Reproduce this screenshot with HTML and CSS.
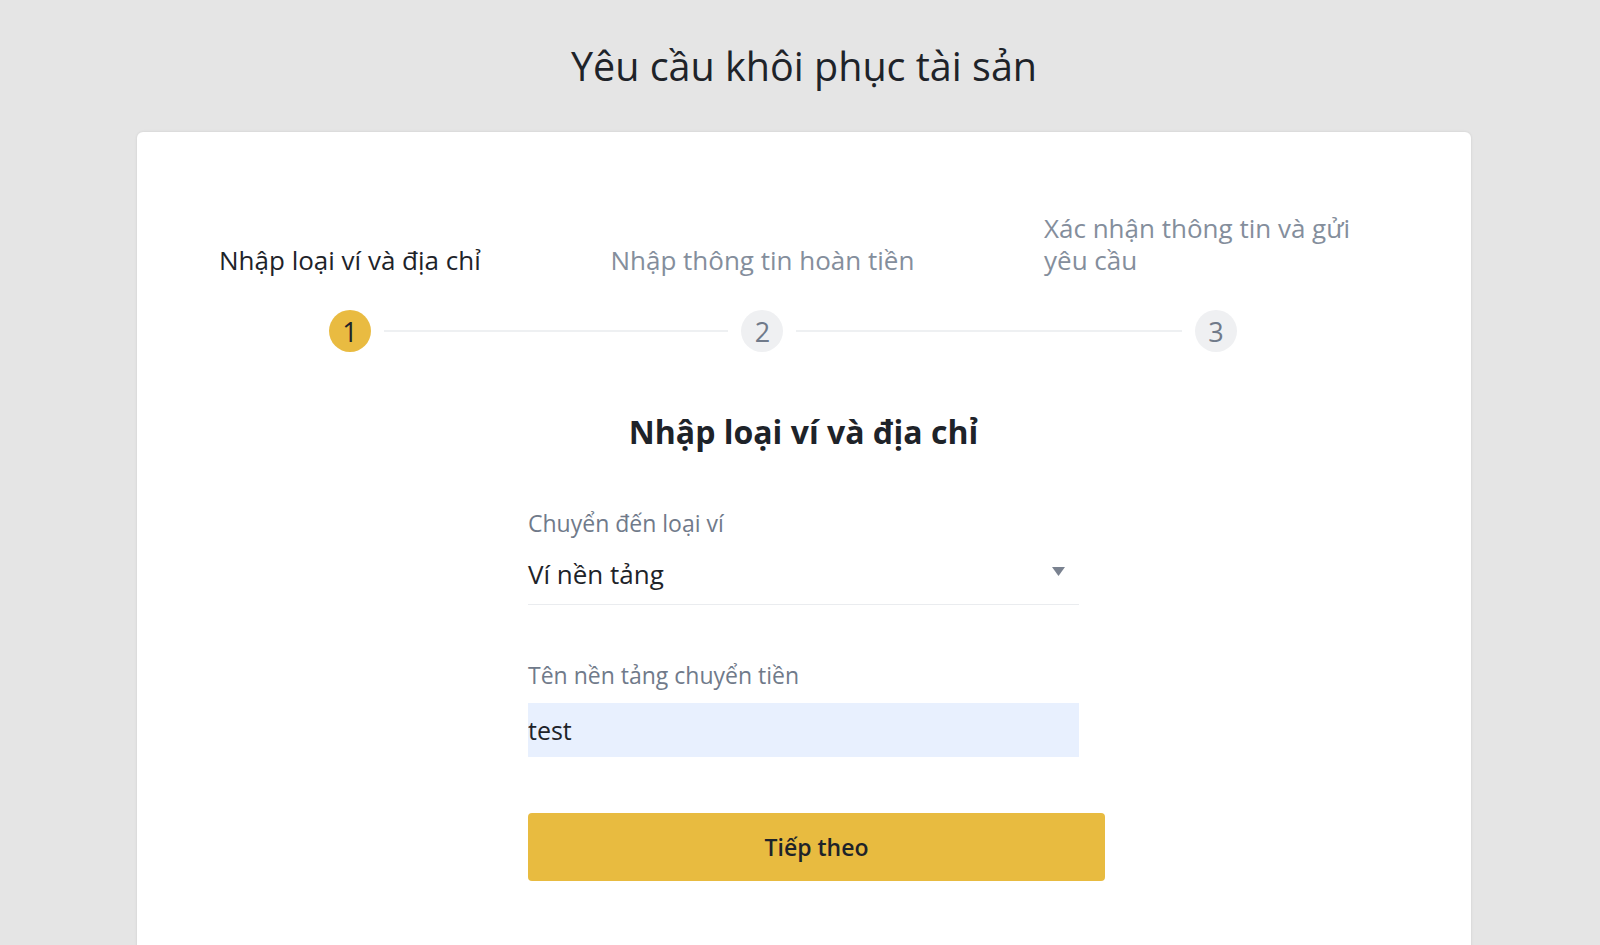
FILE: index.html
```html
<!DOCTYPE html>
<html lang="vi">
<head>
<meta charset="utf-8">
<title>Yêu cầu khôi phục tài sản</title>
<link rel="stylesheet" href="styles.css">
</head>
<body>
<div class="page">
  <h1 class="page-title">Yêu cầu khôi phục tài sản</h1>
  <div class="card">
    <div class="steps">
      <div class="step step-active">
        <div class="step-label">Nhập loại ví và địa chỉ</div>
        <div class="step-track">
          <span class="seg seg-left seg-hidden"></span>
          <span class="circle">1</span>
          <span class="seg seg-right"></span>
        </div>
      </div>
      <div class="connector"></div>
      <div class="step">
        <div class="step-label">Nhập thông tin hoàn tiền</div>
        <div class="step-track">
          <span class="seg seg-left"></span>
          <span class="circle">2</span>
          <span class="seg seg-right"></span>
        </div>
      </div>
      <div class="connector"></div>
      <div class="step">
        <div class="step-label">Xác nhận thông tin và gửi yêu cầu</div>
        <div class="step-track">
          <span class="seg seg-left"></span>
          <span class="circle">3</span>
          <span class="seg seg-right seg-hidden"></span>
        </div>
      </div>
    </div>

    <h2 class="section-title">Nhập loại ví và địa chỉ</h2>

    <form class="form">
      <div class="field-label">Chuyển đến loại ví</div>
      <div class="select">
        <span class="select-value">Ví nền tảng</span>
        <svg class="select-arrow" width="13" height="9" viewBox="0 0 13 9"><path d="M0 0H13L6.5 9Z" fill="#7a8290"/></svg>
      </div>

      <div class="field-label field-label-2">Tên nền tảng chuyển tiền</div>
      <input class="text-input" type="text" value="test">

      <button type="button" class="btn-next">Tiếp theo</button>
    </form>
  </div>
</div>
</body>
</html>
```

FILE: styles.css
```css
* { box-sizing: border-box; }

html, body {
  margin: 0;
  padding: 0;
  height: 100%;
}

body {
  background: #e5e5e5;
  font-family: "Open Sans", "Noto Sans", Arial, sans-serif;
  color: #1e2329;
  overflow: hidden;
}

.page {
  padding: 42px 129px 0 137px;
}

.page-title {
  margin: 0;
  font-size: 39.5px;
  line-height: 48px;
  font-weight: 400;
  text-align: center;
  color: #1e2329;
}

.card {
  margin-top: 42px;
  background: #ffffff;
  border-radius: 6px;
  box-shadow: 0 0 3px rgba(0, 0, 0, 0.10);
  padding: 80px 83px 200px 82px;
  min-height: 900px;
}

/* Steps */
.steps {
  display: flex;
  align-items: flex-end;
}

.step {
  display: flex;
  flex-direction: column;
  flex: 0 0 auto;
}

.step-label {
  max-width: 344px;
  font-size: 26px;
  line-height: 32px;
  color: #848e9c;
}

.step-active .step-label {
  color: #1e2329;
}

.step-track {
  display: flex;
  align-items: center;
  margin-top: 34px;
  height: 42px;
}

.seg {
  flex: 1;
  height: 2px;
  background: #eef0f2;
}

.seg-hidden {
  visibility: hidden;
}

.seg-right { margin-left: 13px; }
.seg-left { margin-right: 13px; }

.circle {
  flex: 0 0 42px;
  width: 42px;
  height: 42px;
  border-radius: 50%;
  background: #eff0f2;
  color: #707a8a;
  display: flex;
  align-items: center;
  justify-content: center;
  font-size: 27px;
  line-height: 1;
}

.step-active .circle {
  background: #e9bb41;
  color: #1e2329;
}

.connector {
  flex: 1;
  height: 2px;
  background: #eef0f2;
  margin-bottom: 20px;
}

/* Section */
.section-title {
  margin: 60px 0 0;
  text-align: center;
  font-size: 32px;
  line-height: 40px;
  font-weight: 700;
  color: #1e2329;
}

.form {
  width: 551px;
  margin: 56px auto 0;
}

.field-label {
  font-size: 23px;
  line-height: 30px;
  color: #707a8a;
}

.field-label-2 {
  margin-top: 55px;
}

.select {
  margin-top: 18px;
  display: flex;
  align-items: center;
  justify-content: space-between;
  padding-bottom: 12px;
  border-bottom: 1px solid #eaecef;
}

.select-value {
  font-size: 26px;
  line-height: 36px;
  color: #1e2329;
}

.select-arrow {
  margin-right: 14px;
  margin-bottom: 6px;
}

.text-input {
  display: block;
  width: 100%;
  height: 54px;
  margin-top: 13px;
  padding: 0;
  border: none;
  outline: none;
  background: #e8f0fe;
  font-family: "Open Sans", "Noto Sans", Arial, sans-serif;
  font-size: 25px;
  color: #1e2329;
}

.btn-next {
  display: block;
  width: 577px;
  height: 68px;
  margin-top: 56px;
  border: none;
  border-radius: 4px;
  background: #e8bb40;
  font-family: "Open Sans", "Noto Sans", Arial, sans-serif;
  font-size: 23px;
  font-weight: 600;
  color: #1e2329;
  cursor: pointer;
}
```
